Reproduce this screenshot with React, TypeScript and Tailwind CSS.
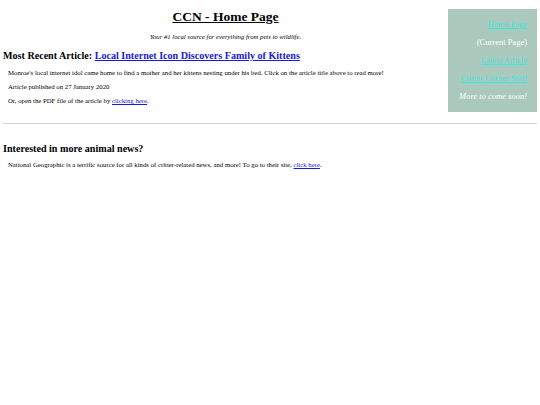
import React from 'react';

const navItems = [
  { label: 'Home Page', link: true },
  { label: '(Current Page)', link: false },
  { label: 'Latest Article', link: true },
  { label: 'Critter Corner Staff', link: true },
];

const App = () => {
  return (
    <div className="min-h-screen bg-white px-[3px] font-['Liberation_Serif',serif] text-black">
      <div className="flex items-start">
        <div className="flex-1">
          <h1 className="pt-[9px] text-center text-[13.5px] font-bold leading-[16px] underline">
            CCN - Home Page
          </h1>
          <p className="mt-[8px] text-center text-[6.7px] italic leading-[8px]">
            Your #1 local source for everything from pets to wildlife.
          </p>
          <h2 className="mt-[9px] text-[10.1px] font-bold leading-[12px]">
            Most Recent Article:{' '}
            <a href="#" className="text-[#1a1ad6] underline">
              Local Internet Icon Discovers Family of Kittens
            </a>
          </h2>
          <div className="mt-[7px] flex flex-col gap-[6px] pl-[5px] text-[6.75px] leading-[8px]">
            <p>
              Monroe's local internet idol came home to find a mother and her kittens nesting under his bed. Click on
              the article title above to read more!
            </p>
            <p>Article published on 27 January 2020</p>
            <p>
              Or, open the PDF file of the article by{' '}
              <a href="#" className="text-[#1a1ad6] underline">
                clicking here
              </a>
              .
            </p>
          </div>
        </div>
        <aside className="mt-[9px] flex h-[103px] w-[89px] flex-col items-end gap-[9px] bg-[#aac9bc] pr-[10px] pt-[11px] text-[8.5px] leading-[9px] text-white">
          {navItems.map((item) =>
            item.link ? (
              <a key={item.label} href="#" className="text-[#3ee6e0] underline">
                {item.label}
              </a>
            ) : (
              <span key={item.label}>{item.label}</span>
            )
          )}
          <span className="italic">More to come soon!</span>
        </aside>
      </div>

      <hr className="mt-[11px] border-t border-[#d2d2d2]" />

      <h3 className="mt-[19px] text-[10.1px] font-bold leading-[12px]">Interested in more animal news?</h3>
      <p className="mt-[6px] pl-[5px] text-[6.75px] leading-[8px]">
        National Geographic is a terrific source for all kinds of critter-related news, and more! To go to their site,{' '}
        <a href="#" className="text-[#1a1ad6] underline">
          click here
        </a>
        .
      </p>
    </div>
  );
};

export default App;
